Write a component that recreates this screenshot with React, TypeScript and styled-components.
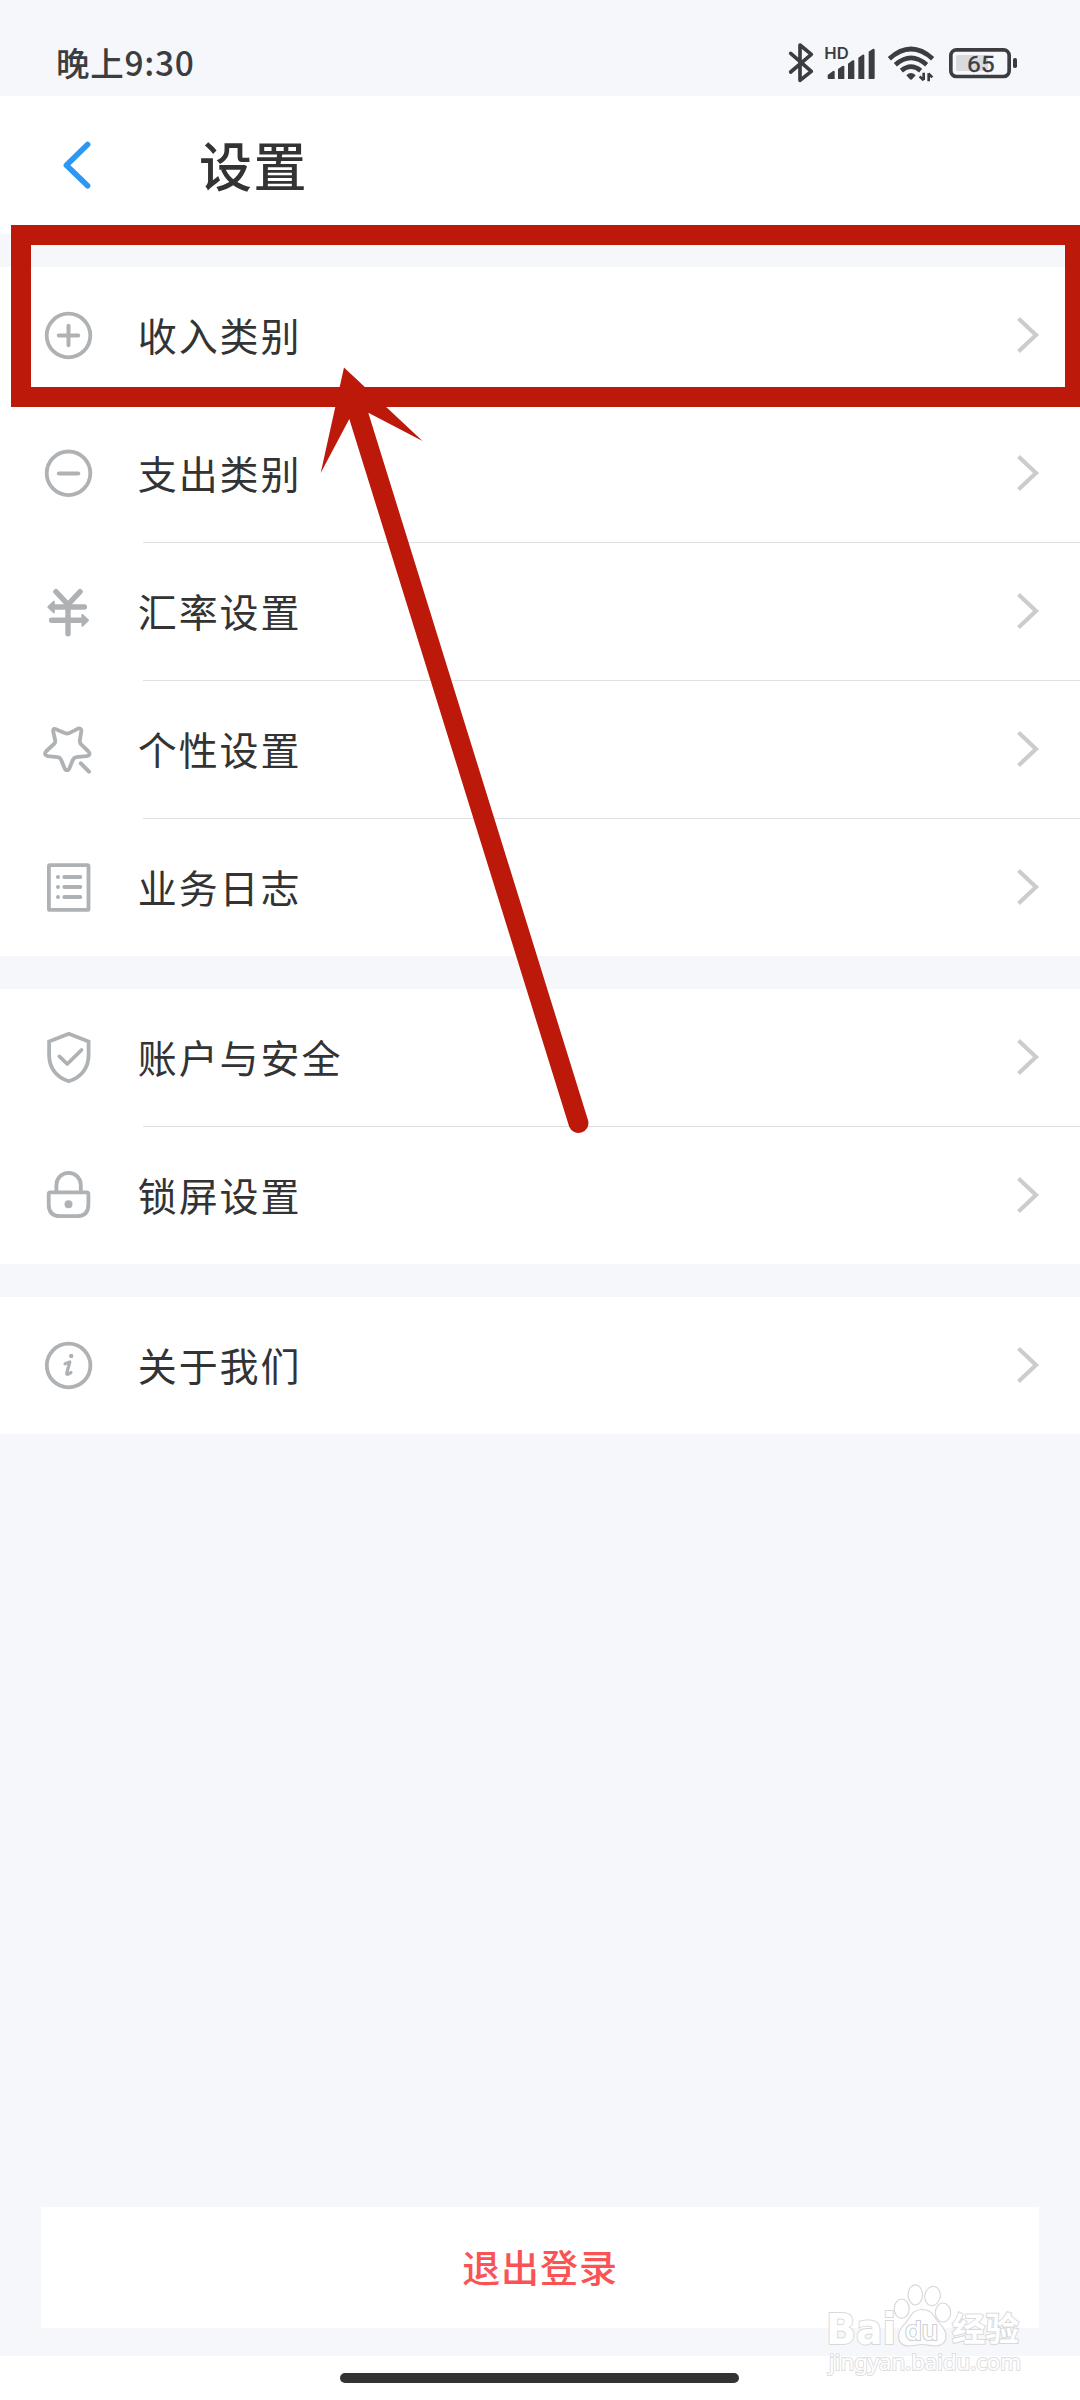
import React from "react";
import styled, { createGlobalStyle } from "styled-components";

const cjk = `"Noto Sans CJK SC", "Noto Sans", sans-serif`;

const GlobalStyle = createGlobalStyle`
  html, body { margin: 0; padding: 0; background: #f5f7fb; }
  * { box-sizing: border-box; }
`;

const Screen = styled.div`
  position: relative;
  width: 1080px;
  height: 2400px;
  overflow: hidden;
  display: flex;
  flex-direction: column;
  background: #f5f7fb;
  color: #333;
  font-family: ${cjk};
`;

const StatusBar = styled.div`
  height: 96px;
  flex: none;
  display: flex;
  justify-content: space-between;
  padding: 42px 62px 0 56px;
`;

const Clock = styled.div`
  margin-top: -1px;
  font-size: 33.5px;
  line-height: 42px;
  letter-spacing: 0.7px;
  font-weight: 500;
  color: #3c3d40;
`;

const StatusIcons = styled.div`
  display: flex;
  height: 42px;
`;

const StatusGlyph = styled.svg<{ $gap?: number }>`
  display: block;
  height: 42px;
  margin-left: ${(p) => p.$gap ?? 0}px;
`;

const Header = styled.header`
  height: 138px;
  flex: none;
  display: flex;
  align-items: center;
  background: #fff;
  padding-left: 60px;
`;

const BackIcon = styled.svg`
  display: block;
  width: 36px;
  height: 56px;
`;

const Title = styled.h1`
  margin: 0 0 2px 103px;
  font-size: 53px;
  line-height: 70px;
  letter-spacing: 1.5px;
  font-weight: 500;
`;

const Group = styled.section`
  flex: none;
  margin-bottom: 33px;
  background: #fff;
  &:first-of-type {
    margin-top: 33px;
  }
`;

const Row = styled.div`
  height: 137px;
  display: flex;
  align-items: center;
  padding: 0 38px;
`;

const Divider = styled.div`
  height: 1px;
  margin-left: 143px;
  background: #e0e0e0;
`;

const RowIcon = styled.svg`
  display: block;
  width: 61px;
  height: 61px;
  flex: none;
  fill: none;
  stroke: #aeb2b5;
  stroke-width: 3.8;
  stroke-linecap: round;
  stroke-linejoin: round;
`;

const Label = styled.div`
  flex: 1;
  margin: 0 0 4px 38.8px;
  font-size: 39px;
  line-height: 56px;
  letter-spacing: 1.9px;
`;

const Chevron = styled.svg`
  display: block;
  width: 30px;
  height: 41px;
  flex: none;
`;

const Footer = styled.div`
  margin-top: auto;
  flex: none;
  padding: 0 41px 28px;
`;

const LogoutButton = styled.button`
  display: flex;
  align-items: center;
  justify-content: center;
  width: 100%;
  height: 121px;
  border: 0;
  padding: 0 0 3px;
  background: #fff;
  color: #f95355;
  font: 500 38px/56px ${cjk};
  letter-spacing: 0.9px;
`;

const NavBar = styled.div`
  height: 44px;
  flex: none;
  display: flex;
  justify-content: center;
  padding: 17px 1px 0 0;
  background: #fff;
`;

const HomeIndicator = styled.div`
  width: 399px;
  height: 10px;
  border-radius: 5px;
  background: #333;
`;

const Highlight = styled.div`
  position: absolute;
  left: 10.6px;
  top: 225.3px;
  width: 1074px;
  height: 181.3px;
  border: 20px solid #bc190a;
`;

const Arrow = styled.svg`
  position: absolute;
  left: 310px;
  top: 360px;
  width: 290px;
  height: 780px;
`;

const Watermark = styled.svg`
  position: absolute;
  left: 820px;
  top: 2280px;
  width: 210px;
  height: 104px;
`;

const icons = {
  plus: (
    <>
      <circle cx="68.5" cy="68.5" r="21.8" />
      <path d="M58.8 68.5h19.4M68.5 58.8v19.4" strokeWidth="4" />
    </>
  ),
  minus: (
    <>
      <circle cx="68.5" cy="68.3" r="21.8" />
      <path d="M58.8 68.5h19.4" strokeWidth="4" />
    </>
  ),
  exchange: (
    <>
      <path d="M55.9 48.6L68 61.5L80.1 48.6M68 61.5V90.7M53 64H84.4M51.6 77.3H84" strokeWidth="5.4" strokeLinejoin="miter" />
      <path d="M48.3 64L53.8 58.6V69.4ZM88 77.3L82.4 71.9V82.7Z" fill="#aeb2b5" strokeWidth="2" />
    </>
  ),
  wand: (
    <>
      <path d="M58.1 49.2L64.8 52.1Q67 53 69.2 52.1L76.7 48.4C79.5 46.4 81.8 47.7 81.3 50.5L79.8 59.5Q79.6 61.6 80.8 63.2L88 70C90.7 72.8 89.5 74.7 86.5 75.2L76.4 76.2Q74 76.5 73 78.6L69.6 86.8C68.5 90 65.5 90 64.4 86.8L61 78.6Q60 76.5 57.6 76.2L48 75.2C45 74.7 44 72.8 46.4 70L54 63Q55.5 61.6 55.2 59.5L53.2 50.5C52.8 47.7 54.4 46.8 58.1 49.2Z" />
      <path d="M80.8 82.4L89 90.7" strokeWidth="4" />
    </>
  ),
  journal: (
    <>
      <rect x="48.9" y="46.1" width="39.6" height="44.8" rx="1" />
      <path d="M64.3 58h16M64.3 68h16M64.3 78h16" strokeWidth="4" />
      <path d="M58 58h.01M58 68h.01M58 78h.01" strokeWidth="4" />
    </>
  ),
  shield: (
    <>
      <path d="M68.8 44.8L88.6 52.5V66C88.6 79 81 88.5 68.8 92.2C56.6 88.5 49.1 79 49.1 66V52.5Z" strokeLinejoin="miter" />
      <path d="M59.4 67.4L67.3 75L81.5 61" />
    </>
  ),
  lock: (
    <>
      <path d="M56.4 65V58A12.2 12.2 0 0 1 80.8 58V65" />
      <path d="M50.3 65.3H86.8Q88.4 65.3 88.4 66.9V77.5Q88.4 89.2 76.7 89.2H60.4Q48.7 89.2 48.7 77.5V66.9Q48.7 65.3 50.3 65.3Z" />
      <circle cx="68.5" cy="77.3" r="4" fill="#aeb2b5" stroke="none" />
    </>
  ),
  info: (
    <>
      <circle cx="68.6" cy="68.5" r="21.8" />
      <path d="M65 66.8L69.8 65L66.7 76.2Q66.6 78.8 71 75.4" strokeWidth="3.2" />
      <circle cx="71.2" cy="59" r="2.2" fill="#aeb2b5" stroke="none" />
    </>
  ),
};

type IconName = keyof typeof icons;

const groups: { icon: IconName; label: string }[][] = [
  [
    { icon: "plus", label: "收入类别" },
    { icon: "minus", label: "支出类别" },
    { icon: "exchange", label: "汇率设置" },
    { icon: "wand", label: "个性设置" },
    { icon: "journal", label: "业务日志" },
  ],
  [
    { icon: "shield", label: "账户与安全" },
    { icon: "lock", label: "锁屏设置" },
  ],
  [{ icon: "info", label: "关于我们" }],
];

const dark = "#3c3d40";

function StatusArea() {
  return (
    <StatusBar>
      <Clock>晚上9:30</Clock>
      <StatusIcons>
        <StatusGlyph width="27" viewBox="84 66 81 126">
          <path d="M92 100L154 154L120 181V75L154 103L92 156" fill="none" stroke={dark} strokeWidth="11" strokeLinecap="round" strokeLinejoin="round" />
        </StatusGlyph>
        <StatusGlyph width="52" $gap={9} viewBox="192 66 156 126">
          <text x="193" y="117" fontFamily="Inter, sans-serif" fontWeight="600" fontSize="49" textLength="73" lengthAdjust="spacingAndGlyphs" fill={dark}>HD</text>
          <path d="M203 165L219 153Q224 151 224 156V177H206Q203 177 203 174ZM234 147L247 138Q253 136 253 141V177H234ZM264 131L278 121Q283 119 283 124V177H264ZM295 113L308 104Q313 102 313 107V177H295ZM326 95L338 87Q344 85 344 90V174Q344 177 341 177H326Z" fill={dark} />
        </StatusGlyph>
        <StatusGlyph width="48" $gap={11} viewBox="381 66 144 126">
          <g fill="none" stroke={dark} strokeWidth="14">
            <path d="M388 116Q453 58 518 116" />
            <path d="M406 134Q453 93 500 134" />
            <path d="M424 152Q453 128 482 152" />
          </g>
          <path d="M439 166Q453 152 467 166L457 177Q453 181 449 177Z" fill={dark} />
          <path d="M491 158V180M491 181L479 169M506 184V160M505 160L517 172" stroke={dark} strokeWidth="8" fill="none" />
        </StatusGlyph>
        <StatusGlyph width="70" $gap={13} viewBox="564 66 210 126">
          <rect x="588" y="105" width="96" height="48" rx="6" fill="#d9dadd" />
          <rect x="572.5" y="89.5" width="175" height="80" rx="17" fill="none" stroke={dark} strokeWidth="11" />
          <rect x="759" y="114" width="12" height="30" rx="5" fill={dark} />
          <text x="621" y="155" fontFamily="Roboto, sans-serif" fontWeight="400" fontSize="67" textLength="83" lengthAdjust="spacingAndGlyphs" fill={dark} stroke={dark} strokeWidth="1">65</text>
        </StatusGlyph>
      </StatusIcons>
    </StatusBar>
  );
}

export default function App() {
  return (
    <Screen>
      <GlobalStyle />
      <StatusArea />
      <Header>
        <BackIcon viewBox="60 137 36 56">
          <path d="M87.6 144.5L66.4 165.2L87.6 185.8" fill="none" stroke="#2d97f2" strokeWidth="5.6" strokeLinecap="round" strokeLinejoin="round" />
        </BackIcon>
        <Title>设置</Title>
      </Header>
      {groups.map((rows, g) => (
        <Group key={g}>
          {rows.map((row, i) => (
            <React.Fragment key={row.label}>
              {i > 0 && <Divider />}
              <Row>
                <RowIcon viewBox="38 38 61 61">{icons[row.icon]}</RowIcon>
                <Label>{row.label}</Label>
                <Chevron viewBox="1012 315 30 41">
                  <path d="M1018.5 318.5L1036 335L1018.5 351.5" fill="none" stroke="#ccc" strokeWidth="4.2" />
                </Chevron>
              </Row>
            </React.Fragment>
          ))}
        </Group>
      ))}
      <Footer>
        <LogoutButton>退出登录</LogoutButton>
      </Footer>
      <NavBar>
        <HomeIndicator />
      </NavBar>
      <Highlight />
      <Arrow viewBox="310 360 290 780">
        <path d="M344 367.5L422.5 441L368.3 412.8L588.2 1120.8A10 10 0 0 1 569.2 1126.8L349.3 419L320.7 473Z" fill="#bc190a" />
      </Arrow>
      <Watermark viewBox="820 2280 210 104">
        <g fill="#fff" fillOpacity="0.75" stroke="#d8d9dc" strokeWidth="1.2">
          <ellipse cx="901.7" cy="2308.7" rx="7.5" ry="9.7" />
          <ellipse cx="915.3" cy="2294.8" rx="7.2" ry="10" />
          <ellipse cx="932.5" cy="2296" rx="7.7" ry="9.7" transform="rotate(12 932.5 2296)" />
          <ellipse cx="943" cy="2312.5" rx="7.7" ry="9.5" />
          <path d="M922 2309.5C930 2309.5 933 2314 936 2319C940 2325 946 2328 946 2336C946 2343 941 2346 935 2346C929 2346 927 2344.5 922 2344.5C917 2344.5 914 2346 909 2346C902 2346 898.5 2342 898.5 2336C898.5 2328 905 2325 908.5 2319C912 2313 915 2309.5 922 2309.5Z" />
          <g fillOpacity="1" strokeWidth="2" paintOrder="stroke">
            <text x="826" y="2344" fontFamily={`"DejaVu Sans", sans-serif`} fontWeight="700" fontSize="42.5" textLength="70" lengthAdjust="spacingAndGlyphs">Bai</text>
            <text x="905" y="2339.5" fontFamily="Inter, sans-serif" fontWeight="500" fontSize="26" textLength="33" lengthAdjust="spacingAndGlyphs" stroke="#cdced2">du</text>
            <text x="952" y="2341" fontFamily={cjk} fontWeight="700" fontSize="33.5" textLength="67">经验</text>
            <text x="829" y="2370" fontFamily={`"Noto Sans", sans-serif`} fontSize="22.5" textLength="192" lengthAdjust="spacingAndGlyphs" stroke="#dddee0">jingyan.baidu.com</text>
          </g>
        </g>
      </Watermark>
    </Screen>
  );
}
